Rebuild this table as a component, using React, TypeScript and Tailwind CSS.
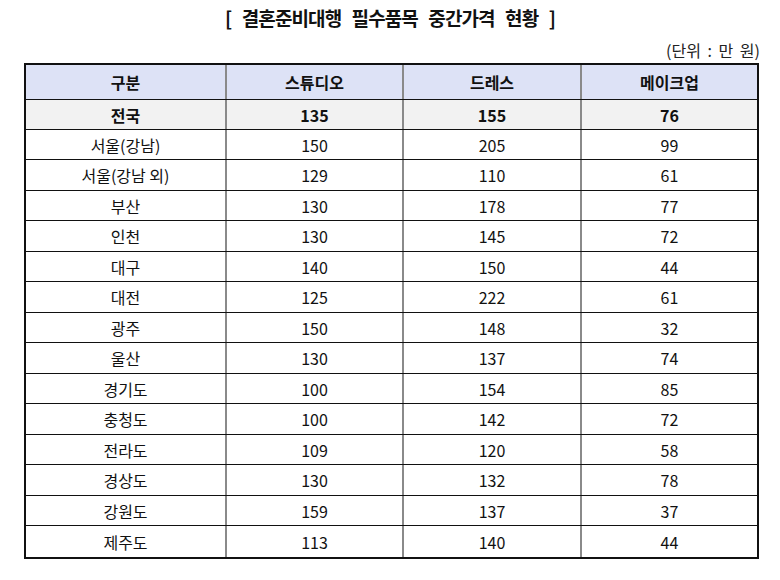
import React from "react";

type Row = { name: string; a: string; b: string; c: string; h: string };

const rows: Row[] = [
  { name: "서울(강남)", a: "150", b: "205", c: "99", h: "h-[30px]" },
  { name: "서울(강남 외)", a: "129", b: "110", c: "61", h: "h-[31px]" },
  { name: "부산", a: "130", b: "178", c: "77", h: "h-[30px]" },
  { name: "인천", a: "130", b: "145", c: "72", h: "h-[31px]" },
  { name: "대구", a: "140", b: "150", c: "44", h: "h-[30px]" },
  { name: "대전", a: "125", b: "222", c: "61", h: "h-[31px]" },
  { name: "광주", a: "150", b: "148", c: "32", h: "h-[30px]" },
  { name: "울산", a: "130", b: "137", c: "74", h: "h-[31px]" },
  { name: "경기도", a: "100", b: "154", c: "85", h: "h-[30px]" },
  { name: "충청도", a: "100", b: "142", c: "72", h: "h-[31px]" },
  { name: "전라도", a: "109", b: "120", c: "58", h: "h-[30px]" },
  { name: "경상도", a: "130", b: "132", c: "78", h: "h-[31px]" },
  { name: "강원도", a: "159", b: "137", c: "37", h: "h-[30px]" },
  { name: "제주도", a: "113", b: "140", c: "44", h: "h-[31px]" },
];

const grid = "grid grid-cols-[201px_177px_178px_175px]";
const cell = "flex items-center justify-center border-r-2 border-[#8a8a8a]";
const lastCell = "flex items-center justify-center";

export default function App() {
  return (
    <div
      className="w-[780px] h-[580px] bg-white text-[#111] overflow-hidden"
      style={{ fontFamily: '"Noto Sans CJK KR", "Noto Sans", sans-serif' }}
    >
      <div className="pt-[5px] h-[30px] text-center text-[19px] leading-[26px] font-bold tracking-[-0.9px] [word-spacing:7px]">
        [ 결혼준비대행 필수품목 중간가격 현황 ]
      </div>
      <div className="mt-[10px] h-[20px] pr-[20px] text-right text-[16px] leading-[20px] text-[#222] [word-spacing:3px]">
        (단위 : 만 원)
      </div>
      <div className="mt-[3px] ml-[24px] w-[735px] border-2 border-[#111] text-[16px]">
        <div className={`${grid} h-[35px] bg-[#dde2f6] border-b border-[#111] font-bold`}>
          <div className={cell}>구분</div>
          <div className={cell}>스튜디오</div>
          <div className={cell}>드레스</div>
          <div className={lastCell}>메이크업</div>
        </div>
        <div className={`${grid} h-[30px] bg-[#f2f2f2] border-b border-[#111] font-bold`}>
          <div className={cell}>전국</div>
          <div className={cell}>135</div>
          <div className={cell}>155</div>
          <div className={lastCell}>76</div>
        </div>
        {rows.map((r, i) => (
          <div
            key={r.name}
            className={`${grid} ${r.h} ${i < rows.length - 1 ? "border-b border-[#111]" : ""}`}
          >
            <div className={cell}>{r.name}</div>
            <div className={cell}>{r.a}</div>
            <div className={cell}>{r.b}</div>
            <div className={lastCell}>{r.c}</div>
          </div>
        ))}
      </div>
    </div>
  );
}
